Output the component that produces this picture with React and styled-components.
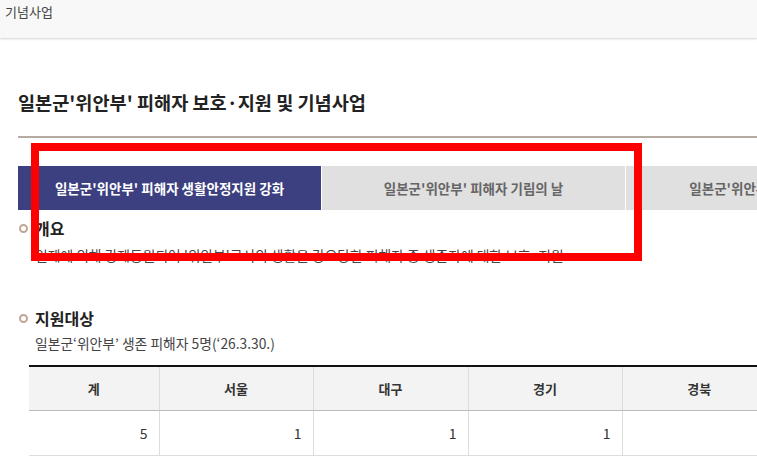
import styled, { createGlobalStyle } from 'styled-components';

const GlobalStyle = createGlobalStyle`
  body {
    margin: 0;
    overflow: hidden;
    background: #fff;
    font-family: 'Noto Sans CJK KR', 'Noto Sans', sans-serif;
    color: #333;
  }
`;

const Page = styled.div`
  position: relative;
  width: 757px;
  overflow: hidden;
`;

const TopBar = styled.div`
  height: 38px;
  background: #f8f8f8;
  box-shadow: 0 1px 2px rgba(0, 0, 0, 0.18);
  padding: 2px 0 0 5px;
  box-sizing: border-box;
  font-size: 13px;
  color: #444;
`;

const Content = styled.div`
  width: 960px;
  padding: 51px 0 0 18px;
`;

const Title = styled.h2`
  margin: 0;
  font-size: 18.6px;
  font-weight: 700;
  line-height: 26px;
  color: #222;
`;

const Rule = styled.hr`
  margin: 21px 0 0;
  border: 0;
  border-top: 2px solid #b5aba3;
`;

const Tabs = styled.ul`
  display: flex;
  list-style: none;
  margin: 28px 0 0;
  padding: 0;
`;

const Tab = styled.li`
  width: 303px;
  height: 44px;
  display: flex;
  align-items: center;
  justify-content: center;
  font-size: 13.5px;
  font-weight: 700;
  background: ${({ $active }) => ($active ? '#3c3f80' : '#e0e0e0')};
  color: ${({ $active }) => ($active ? '#fff' : '#666')};
  border-right: 1px solid #fff;
  flex-shrink: 0;
  white-space: nowrap;
`;

const Section = styled.section`
  padding-top: ${({ $top }) => $top}px;
`;

const Heading = styled.h3`
  display: flex;
  align-items: center;
  gap: 7px;
  margin: 0;
  font-size: 16px;
  font-weight: 700;
  line-height: 22px;
  color: #222;
  &::before {
    content: '';
    width: 5px;
    height: 5px;
    border: 2px solid #c0a596;
    border-radius: 50%;
    margin-left: 1px;
  }
`;

const Desc = styled.p`
  margin: ${({ $gap }) => $gap}px 0 0 17px;
  font-size: 13.8px;
  line-height: 20px;
  color: #444;
  white-space: nowrap;
`;

const Table = styled.table`
  margin: 12px 0 0 11px;
  width: 747px;
  table-layout: fixed;
  border-collapse: collapse;
  border-top: 2px solid #111;
  font-size: 13px;
  color: #333;
`;

const Th = styled.th`
  height: 43px;
  padding: 0;
  background: #f3f3f3;
  font-weight: 700;
  border-left: 1px solid #ddd;
  border-bottom: 1px solid #bbb;
  &:first-child {
    border-left: 0;
  }
`;

const Td = styled.td`
  height: 44px;
  text-align: right;
  padding: 0 11px 0 0;
  border-left: 1px solid #ddd;
  border-bottom: 1px solid #ddd;
  font-size: 14px;
  &:first-child {
    border-left: 0;
  }
`;

const Highlight = styled.div`
  position: absolute;
  left: 31px;
  top: 143px;
  width: 611px;
  height: 118px;
  box-sizing: border-box;
  border: 8px solid #ff0000;
  pointer-events: none;
`;

const tabs = [
  "일본군'위안부' 피해자 생활안정지원 강화",
  "일본군'위안부' 피해자 기림의 날",
  "일본군'위안부' 피해자 기념사업",
];

const regions = [
  { name: '계', value: '5', w: 130 },
  { name: '서울', value: '1', w: 154 },
  { name: '대구', value: '1', w: 155 },
  { name: '경기', value: '1', w: 154 },
  { name: '경북', value: '', w: 154 },
];

const App = () => {
  return (
    <Page>
      <GlobalStyle />
      <TopBar>기념사업</TopBar>
      <Content>
        <Title>일본군'위안부' 피해자 보호·지원 및 기념사업</Title>
        <Rule />
        <Tabs>
          {tabs.map((label, i) => (
            <Tab key={label} $active={i === 0}>
              {label}
            </Tab>
          ))}
        </Tabs>
        <Section $top={7}>
          <Heading>개요</Heading>
          <Desc $gap={6}>
            일제에 의해 강제동원되어 '위안부'로서의 생활을 강요당한 피해자 중 생존자에 대한 보호·지원
          </Desc>
        </Section>
        <Section $top={42}>
          <Heading>지원대상</Heading>
          <Desc $gap={4}>
            일본군‘위안부’ 생존 피해자 5명(‘26.3.30.)
          </Desc>
          <Table>
            <colgroup>
              {regions.map((r) => (
                <col key={r.name} style={{ width: r.w }} />
              ))}
            </colgroup>
            <thead>
              <tr>
                {regions.map((r) => (
                  <Th key={r.name}>{r.name}</Th>
                ))}
              </tr>
            </thead>
            <tbody>
              <tr>
                {regions.map((r) => (
                  <Td key={r.name}>{r.value}</Td>
                ))}
              </tr>
            </tbody>
          </Table>
        </Section>
      </Content>
      <Highlight />
    </Page>
  );
};

export default App;
